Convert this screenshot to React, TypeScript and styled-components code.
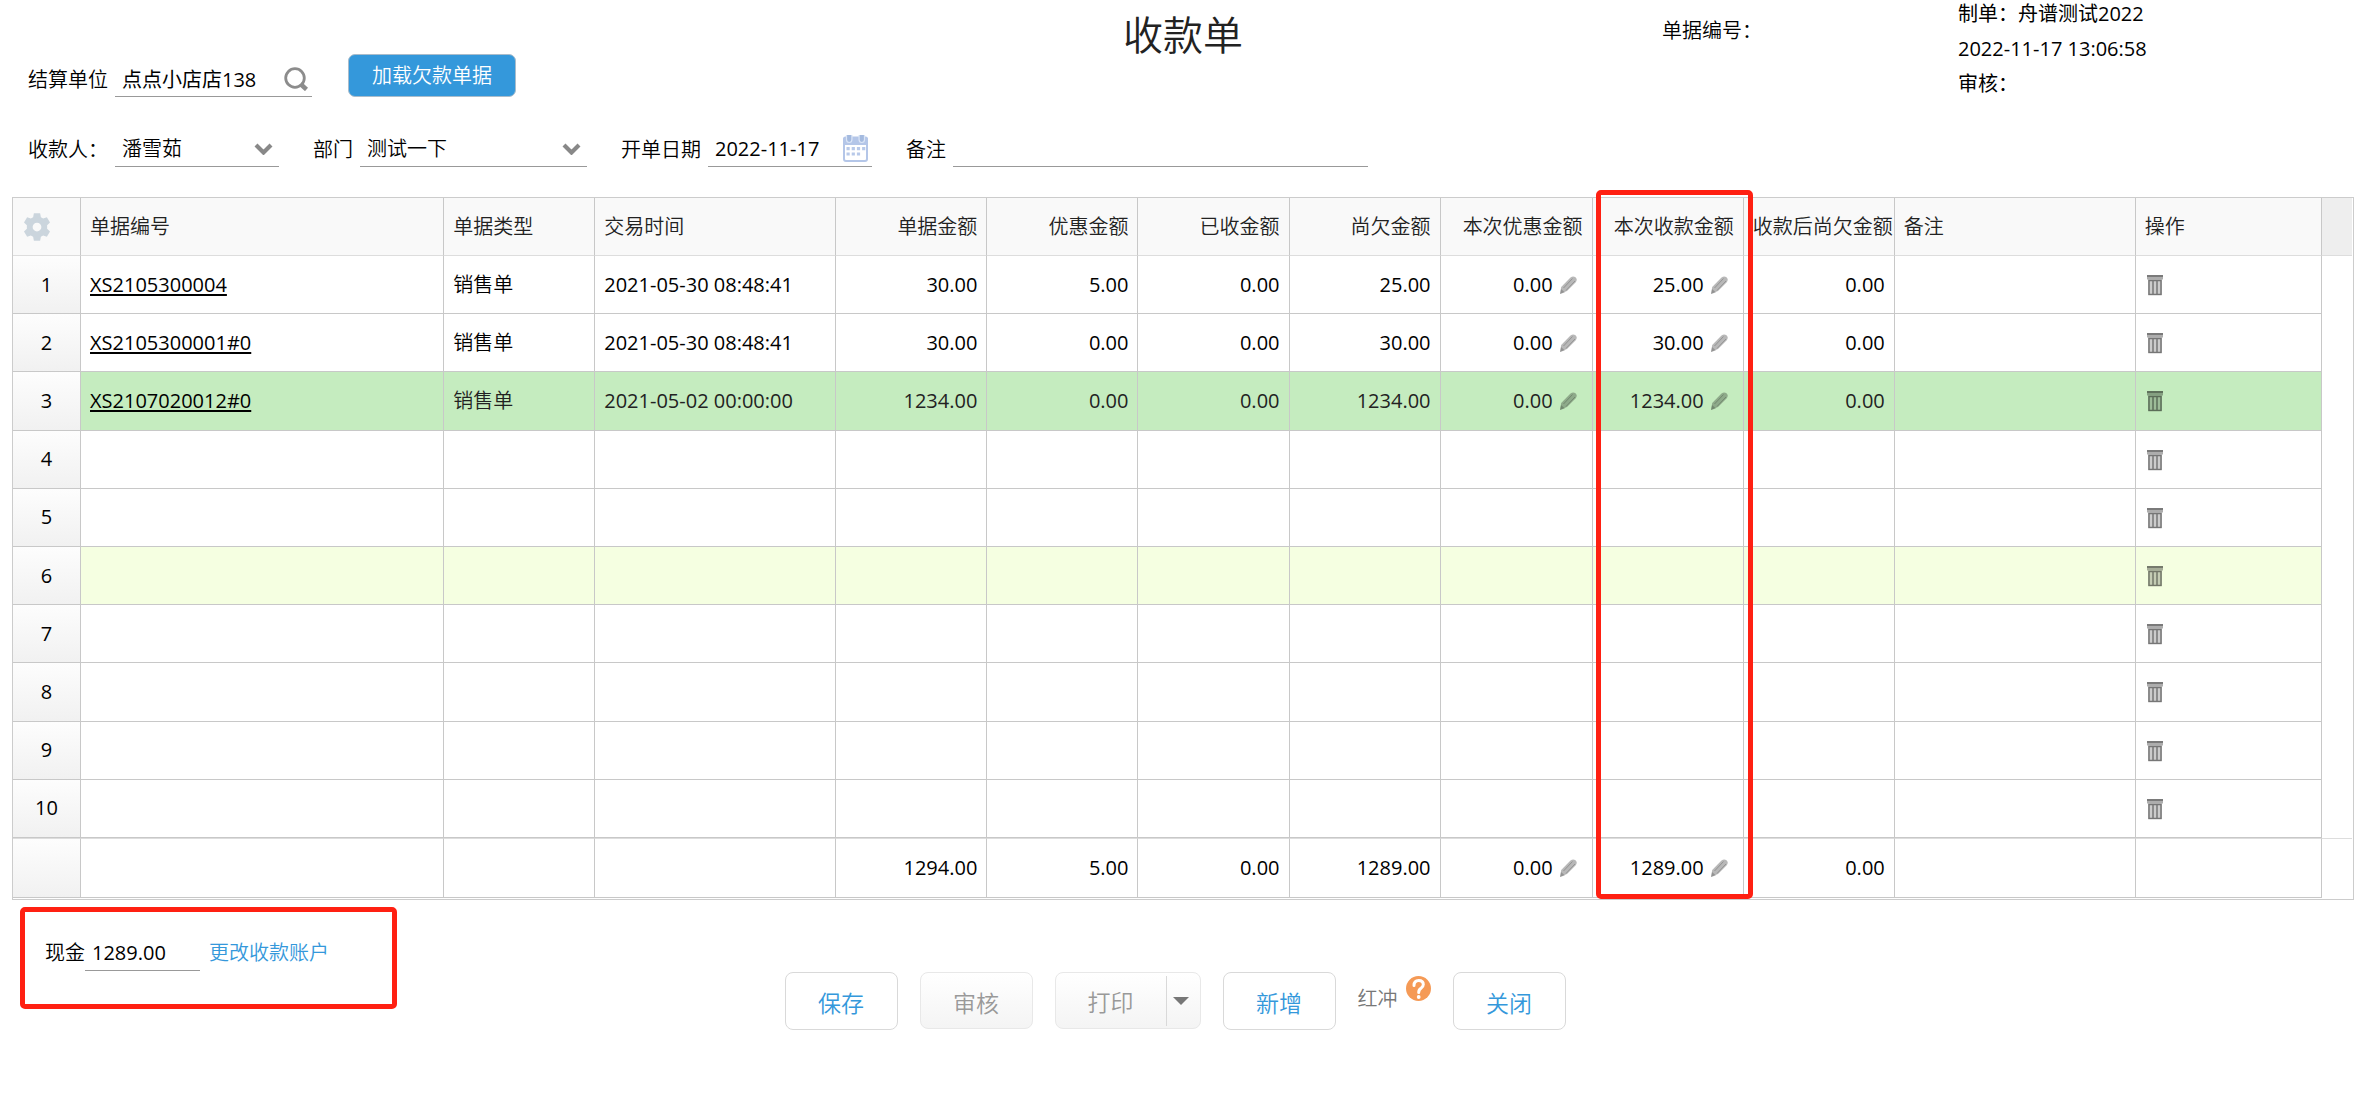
import React from "react";
import styled, { createGlobalStyle, css } from "styled-components";

const GlobalStyle = createGlobalStyle`
  *, *::before, *::after { box-sizing: border-box; }
  body {
    margin: 0;
    background: #fff;
    color: #000;
    font: 20px/28px "Open Sans", "Noto Sans CJK SC", sans-serif;
  }
  button, input, select { font: inherit; color: inherit; }
`;

const Page = styled.main`
  padding: 0 6px 0 12px;
`;

/* ---------- header ---------- */

const Header = styled.header`
  display: grid;
  grid-template-columns: 1fr auto 1fr;
  grid-template-rows: 97px;
`;

const HeaderLeft = styled.div`
  display: flex;
  align-items: flex-end;
  padding-left: 16px;
  gap: 36px;
`;

const Title = styled.h1`
  margin: 0;
  padding-top: 6px;
  font-size: 40px;
  line-height: 58px;
  font-weight: 350;
  color: #222;
`;

const HeaderRight = styled.div`
  display: grid;
  grid-template-columns: 419fr 296fr 396fr;
`;

const DocNumber = styled.span`
  grid-column: 2;
  padding-top: 17px;
  font-weight: 350;
`;

const Meta = styled.div`
  display: flex;
  flex-direction: column;
  gap: 7px;
`;

const FormRow = styled.div`
  display: flex;
  flex-wrap: wrap;
  align-items: center;
  gap: 34px;
  padding: 34px 0 30px 16px;
`;

const Field = styled.div`
  display: flex;
  align-items: center;
  gap: 7px;
`;

const FieldLabel = styled.label<{ $width?: number }>`
  width: ${(p) => (p.$width ? `${p.$width}px` : "auto")};
  padding-top: 2px;
  font-weight: 350;
  white-space: nowrap;
`;

const Underlined = styled.div<{ $width: number }>`
  display: flex;
  align-items: center;
  position: relative;
  width: ${(p) => p.$width}px;
  height: 36px;
  border-bottom: 1px solid #999;
`;

const bareControl = css`
  flex: 1;
  min-width: 0;
  height: 32px;
  padding: 0 0 0 7px;
  border: 0;
  outline: 0;
  background: transparent;
`;

const TextInput = styled.input`
  ${bareControl}
`;

const Select = styled.select`
  ${bareControl}
  appearance: none;
  font-weight: 350;
`;

const Chevron = styled.svg`
  position: absolute;
  right: 6px;
  top: 12px;
  pointer-events: none;
`;

const IconButton = styled.button`
  display: flex;
  flex: none;
  padding: 0;
  border: 0;
  background: none;
  cursor: pointer;
`;

const FieldIconButton = styled(IconButton)`
  margin-right: 4px;
`;

const LoadButton = styled.button`
  height: 43px;
  padding: 0 23px;
  border: 1px solid #a9bccb;
  border-radius: 7px;
  background: #3498db;
  color: #fff;
  font-weight: 350;
`;

/* ---------- table ---------- */

const Grid = styled.section`
  position: relative;
  padding: 0 1px 1px 0;
  border: 1px solid #ccc;
`;

const Table = styled.table`
  width: 100%;
  table-layout: fixed;
  border-collapse: separate;
  border-spacing: 0;
`;

const Body = styled.tbody`
  height: 582px;
`;

const cell = css<{ $align?: string }>`
  height: 58px;
  padding: 0 9px;
  border-right: 1px solid #c8c8c8;
  border-bottom: 1px solid #c8c8c8;
  font-weight: 400;
  text-align: ${(p) => p.$align ?? "left"};
  white-space: nowrap;
`;

const HeadCell = styled.th`
  ${cell}
  border-bottom-color: #ddd;
  background: #f9f9f9;
  color: #222;
  font-weight: 350;
`;

const GutterHead = styled.td`
  border-bottom: 1px solid #ddd;
  background: #eee;
`;

const Cell = styled.td<{ $light?: boolean }>`
  ${cell}
  font-weight: ${(p) => (p.$light ? 350 : 400)};
`;

const RowHead = styled.th`
  ${cell}
  background: linear-gradient(#fdfdfd, #f1f1f1);
  color: #000;
`;

const Row = styled.tr<{ $tone?: "selected" | "hover" }>`
  color: ${(p) => (p.$tone === "selected" ? "#222" : "#000")};
  background: ${(p) =>
    p.$tone === "selected" ? "#c5ecbf" : p.$tone === "hover" ? "#f5ffe1" : "none"};
`;

const Gutter = styled.td`
  background: #fff;
`;

const TotalRow = styled.tr`
  > * {
    height: 60px;
    border-top: 1px solid #ddd;
  }
`;

const Editable = styled.div`
  display: flex;
  justify-content: flex-end;
  align-items: center;
  gap: 7px;
  padding-right: 6px;
`;

const DeleteButton = styled(IconButton)`
  padding: 2px 0 0 2px;
`;

const BillLink = styled.a`
  color: #000;
  text-decoration: underline;
  text-underline-offset: 2px;
`;

const marker = css`
  border: 5px solid #ff2012;
  border-radius: 5px;
`;

const ColumnMarker = styled.div<{ $start: number; $span: number; $total: number }>`
  ${marker}
  position: absolute;
  top: -8px;
  bottom: 0;
  left: calc(100% * ${(p) => p.$start} / ${(p) => p.$total});
  width: calc(100% * ${(p) => p.$span} / ${(p) => p.$total});
  pointer-events: none;
`;

/* ---------- footer ---------- */

const Footer = styled.footer`
  display: grid;
  grid-template-columns: 1fr auto 1fr;
  align-items: start;
  padding: 7px 24px 0 8px;
`;

const PaymentBox = styled.section`
  ${marker}
  display: flex;
  align-items: center;
  width: 377px;
  height: 102px;
  padding: 0 20px 10px;
`;

const CashLabel = styled.label`
  font-weight: 350;
`;

const AccountLink = styled.a`
  margin-left: 9px;
  color: #3498db;
  font-weight: 350;
  text-decoration: none;
`;

const Actions = styled.div`
  display: flex;
  align-items: flex-start;
  gap: 22px;
  padding-top: 65px;
`;

const ActionButton = styled.button`
  width: 113px;
  height: 58px;
  padding: 4px 0 0;
  border: 1px solid #d9d9d9;
  border-radius: 8px;
  background: #fff;
  color: #3498db;
  font-size: 23px;
  font-weight: 350;

  &:disabled {
    height: 57px;
    border-color: #e8e8e8;
    background: linear-gradient(#fff, #f4f4f4);
    color: #999;
  }
`;

const SplitButton = styled.div`
  display: flex;
  align-items: center;
  width: 146px;
  height: 57px;
  border: 1px solid #e8e8e8;
  border-radius: 8px;
  background: linear-gradient(#fff, #f4f4f4);
`;

const SplitMain = styled.button`
  flex: 1;
  height: 50px;
  padding: 2px 0 0;
  border: 0;
  border-right: 1px solid #d9d9d9;
  background: none;
  font-size: 23px;
  font-weight: 350;
  color: #999;
`;

const SplitCaret = styled(IconButton)`
  width: 33px;
  height: 50px;
  align-items: center;
  padding-left: 6px;
`;

const ReverseGroup = styled.div`
  display: flex;
  gap: 8px;
  padding-top: 4px;
`;

const ReverseButton = styled.button`
  padding: 9px 0 0;
  border: 0;
  background: none;
  color: #777;
  font-weight: 350;
`;

/* ---------- icons ---------- */

const SearchIcon = () => (
  <svg width="24" height="24" viewBox="0 0 24 24" fill="none" stroke="#8c8c8c">
    <circle cx="11" cy="11" r="9.300" strokeWidth="2.800" />
    <path d="M16.500 17l6 5.500" strokeWidth="4.500" />
  </svg>
);

const ChevronIcon = () => (
  <Chevron width="19" height="12" viewBox="0 0 19 12" fill="none">
    <path d="M2 2l7.500 7.500L17 2" stroke="#888" strokeWidth="4.200" />
  </Chevron>
);

const CalendarIcon = () => (
  <svg width="25" height="27" viewBox="0 0 25 27">
    <rect x="1" y="3" width="23" height="23" rx="2" fill="#fff" stroke="#b4c6e8" strokeWidth="2" />
    <path d="M0 10V4q0-2.500 2.500-2.500h20Q25 1.500 25 4v6z" fill="#b4c6e8" />
    <path d="M3.500 0v4.500q0 3 2.700 3t2.700-3V0M16.100 0v4.500q0 3 2.700 3t2.700-3V0" stroke="#dbe5f6" strokeWidth="1.200" fill="#a4badf" />
    <path d="M3.500 13.700h19M3.500 19h14" stroke="#b8c9e9" strokeWidth="3.200" strokeDasharray="3.200 2" />
  </svg>
);

const GearIcon = () => (
  <svg width="30" height="30" viewBox="0 0 24 24" fill="#cbd5dd">
    <path
      fillRule="evenodd"
      d="M9.500 1h5l.6 3.100 1.800 1 3-1 2.500 4.200-2.300 2.200v2.800l2.300 2.300-2.500 4.200-3-1-1.800 1-.6 3.100h-5l-.6-3.100-1.800-1-3 1-2.500-4.200 2.300-2.300v-2.800L1.600 8.300l2.500-4.200 3 1 1.800-1zM12 8.500a3.500 3.500 0 1 0 0 7 3.500 3.500 0 0 0 0-7z"
    />
  </svg>
);

const PenIcon = () => (
  <svg width="17" height="18" viewBox="0 0 17 18">
    <path d="M0 18l1.200-7L10.500 1.500Q13-.5 15.500 1.200 18 3.500 15.500 6.500L7 15z" fill="#000" fillOpacity=".28" />
    <path d="M3.500 12l9-9.500M6 14.500l9-9.500" stroke="#000" strokeOpacity=".2" fill="none" />
    <path d="M0 18l1-5 4 3.500z" fill="#000" fillOpacity=".2" />
  </svg>
);

const TrashIcon = () => (
  <svg width="16" height="21" viewBox="0 0 16 21">
    <path d="M0 0h16v2H0z" fill="#000" fillOpacity=".52" />
    <path d="M0 2h16v2.500H0z" fill="#000" fillOpacity=".32" />
    <path d="M1 4.500h14V20H1z" fill="#000" fillOpacity=".2" />
    <path d="M2 5.500v14h12v-14zM6 5.500v14M10 5.500v14" stroke="#000" strokeOpacity=".42" strokeWidth="1.500" fill="none" />
  </svg>
);

const HelpIcon = () => (
  <svg width="25" height="25" viewBox="0 0 25 25" fill="none">
    <circle cx="12.500" cy="12.500" r="12.500" fill="#f59a56" />
    <path d="M8 9.500q0-5 4.700-5 4.600 0 4.600 4 0 2.200-2.300 3.800-2.300 1.500-2.300 4.200" stroke="#fff" strokeWidth="3" strokeLinecap="round" />
    <circle cx="12.700" cy="21" r="1.900" fill="#fff" />
  </svg>
);

/* ---------- data ---------- */

type Column = { key: string; label: string; width: number; align?: string; editable?: boolean };

const ROW_HEAD_WIDTH = 68;
const GUTTER_WIDTH = 30;

const columns: Column[] = [
  { key: "no", label: "单据编号", width: 363 },
  { key: "type", label: "单据类型", width: 151 },
  { key: "time", label: "交易时间", width: 241 },
  { key: "amount", label: "单据金额", width: 151, align: "right" },
  { key: "discount", label: "优惠金额", width: 151, align: "right" },
  { key: "received", label: "已收金额", width: 151, align: "right" },
  { key: "owed", label: "尚欠金额", width: 151, align: "right" },
  { key: "curDiscount", label: "本次优惠金额", width: 152, align: "right", editable: true },
  { key: "curReceived", label: "本次收款金额", width: 151, align: "right", editable: true },
  { key: "left", label: "收款后尚欠金额", width: 151, align: "right" },
  { key: "remark", label: "备注", width: 241 },
];

const ACTION_WIDTH = 186;
const TOTAL_WIDTH =
  ROW_HEAD_WIDTH + columns.reduce((sum, c) => sum + c.width, 0) + ACTION_WIDTH + GUTTER_WIDTH;

const records: Record<string, string>[] = [
  { no: "XS2105300004", type: "销售单", time: "2021-05-30 08:48:41", amount: "30.00", discount: "5.00", received: "0.00", owed: "25.00", curDiscount: "0.00", curReceived: "25.00", left: "0.00" },
  { no: "XS2105300001#0", type: "销售单", time: "2021-05-30 08:48:41", amount: "30.00", discount: "0.00", received: "0.00", owed: "30.00", curDiscount: "0.00", curReceived: "30.00", left: "0.00" },
  { no: "XS2107020012#0", type: "销售单", time: "2021-05-02 00:00:00", amount: "1234.00", discount: "0.00", received: "0.00", owed: "1234.00", curDiscount: "0.00", curReceived: "1234.00", left: "0.00" },
];

const totals: Record<string, string> = {
  amount: "1294.00", discount: "5.00", received: "0.00", owed: "1289.00",
  curDiscount: "0.00", curReceived: "1289.00", left: "0.00",
};

const rows = Array.from({ length: 10 }, (_, i) => records[i] ?? {});

const CellContent = ({ column, value }: { column: Column; value?: string }) => {
  if (!value) return null;
  if (column.key === "no") return <BillLink href="#">{value}</BillLink>;
  if (column.editable)
    return (
      <Editable>
        {value}
        <IconButton aria-label="编辑"><PenIcon /></IconButton>
      </Editable>
    );
  return <>{value}</>;
};

export default function App() {
  return (
    <>
      <GlobalStyle />
      <Page>
        <Header>
          <HeaderLeft>
            <Field>
              <FieldLabel htmlFor="unit">结算单位</FieldLabel>
              <Underlined $width={197}>
                <TextInput id="unit" defaultValue="点点小店店138" />
                <FieldIconButton aria-label="搜索"><SearchIcon /></FieldIconButton>
              </Underlined>
            </Field>
            <LoadButton>加载欠款单据</LoadButton>
          </HeaderLeft>
          <Title>收款单</Title>
          <HeaderRight>
            <DocNumber>单据编号：</DocNumber>
            <Meta>
              <span>制单：舟谱测试2022</span>
              <span>2022-11-17 13:06:58</span>
              <span>审核：</span>
            </Meta>
          </HeaderRight>
        </Header>

        <FormRow>
          <Field>
            <FieldLabel htmlFor="payee" $width={80}>收款人：</FieldLabel>
            <Underlined $width={164}>
              <Select id="payee"><option>潘雪茹</option></Select>
              <ChevronIcon />
            </Underlined>
          </Field>
          <Field>
            <FieldLabel htmlFor="dept">部门</FieldLabel>
            <Underlined $width={227}>
              <Select id="dept"><option>测试一下</option></Select>
              <ChevronIcon />
            </Underlined>
          </Field>
          <Field>
            <FieldLabel htmlFor="date">开单日期</FieldLabel>
            <Underlined $width={164}>
              <TextInput id="date" defaultValue="2022-11-17" />
              <FieldIconButton aria-label="选择日期"><CalendarIcon /></FieldIconButton>
            </Underlined>
          </Field>
          <Field>
            <FieldLabel htmlFor="remark">备注</FieldLabel>
            <Underlined $width={415}>
              <TextInput id="remark" />
            </Underlined>
          </Field>
        </FormRow>

        <Grid>
          <Table>
            <colgroup>
              <col width={ROW_HEAD_WIDTH} />
              {columns.map((c) => <col key={c.key} width={c.width} />)}
              <col width={ACTION_WIDTH} />
              <col width={GUTTER_WIDTH} />
            </colgroup>
            <thead>
              <tr>
                <HeadCell>
                  <IconButton aria-label="设置"><GearIcon /></IconButton>
                </HeadCell>
                {columns.map((c) => <HeadCell key={c.key} $align={c.align}>{c.label}</HeadCell>)}
                <HeadCell>操作</HeadCell>
                <GutterHead />
              </tr>
            </thead>
            <Body>
              {rows.map((row, i) => (
                <Row key={i} $tone={i === 2 ? "selected" : i === 5 ? "hover" : undefined}>
                  <RowHead $align="center">{i + 1}</RowHead>
                  {columns.map((c) => (
                    <Cell key={c.key} $align={c.align} $light={c.key === "type"}>
                      <CellContent column={c} value={row[c.key]} />
                    </Cell>
                  ))}
                  <Cell>
                    <DeleteButton aria-label="删除"><TrashIcon /></DeleteButton>
                  </Cell>
                  <Gutter />
                </Row>
              ))}
            </Body>
            <tfoot>
              <TotalRow>
                <RowHead />
                {columns.map((c) => (
                  <Cell key={c.key} $align={c.align}>
                    <CellContent column={c} value={totals[c.key]} />
                  </Cell>
                ))}
                <Cell />
                <Gutter />
              </TotalRow>
            </tfoot>
          </Table>
          <ColumnMarker $start={1582} $span={157} $total={TOTAL_WIDTH + 1} />
        </Grid>

        <Footer>
          <PaymentBox>
            <CashLabel htmlFor="cash">现金</CashLabel>
            <Underlined $width={115}>
              <TextInput id="cash" defaultValue="1289.00" />
            </Underlined>
            <AccountLink href="#">更改收款账户</AccountLink>
          </PaymentBox>
          <Actions>
            <ActionButton>保存</ActionButton>
            <ActionButton disabled>审核</ActionButton>
            <SplitButton>
              <SplitMain disabled>打印</SplitMain>
              <SplitCaret aria-label="更多打印选项">
                <svg width="16" height="8" viewBox="0 0 16 8"><path d="M0 0h16L8 8z" fill="#777" /></svg>
              </SplitCaret>
            </SplitButton>
            <ActionButton>新增</ActionButton>
            <ReverseGroup>
              <ReverseButton>红冲</ReverseButton>
              <HelpIcon />
            </ReverseGroup>
            <ActionButton>关闭</ActionButton>
          </Actions>
        </Footer>
      </Page>
    </>
  );
}
